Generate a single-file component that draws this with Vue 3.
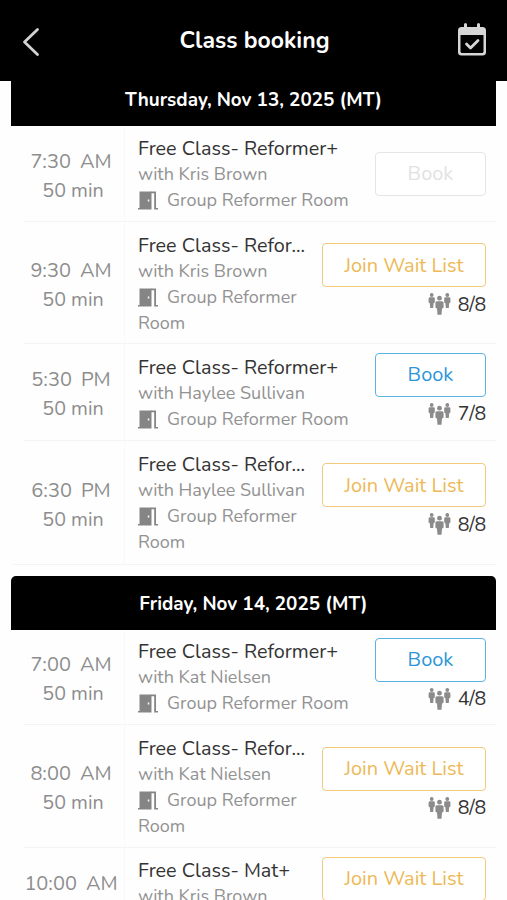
<script setup>
const days = [
  {
    label: 'Thursday, Nov 13, 2025 (MT)',
    key: 'thu',
    classes: [
      { h: 96, time: '7:30', half: 'AM', title: 'Free Class- Reformer+', coach: 'Kris Brown', action: 'disabled' },
      { h: 122, time: '9:30', half: 'AM', title: 'Free Class- Refor...', coach: 'Kris Brown', action: 'wait', count: '8/8' },
      { h: 97, time: '5:30', half: 'PM', title: 'Free Class- Reformer+', coach: 'Haylee Sullivan', action: 'book', count: '7/8' },
      { h: 124, time: '6:30', half: 'PM', title: 'Free Class- Refor...', coach: 'Haylee Sullivan', action: 'wait', count: '8/8' },
    ],
  },
  {
    label: 'Friday, Nov 14, 2025 (MT)',
    key: 'fri',
    classes: [
      { h: 95, time: '7:00', half: 'AM', title: 'Free Class- Reformer+', coach: 'Kat Nielsen', action: 'book', count: '4/8' },
      { h: 123, time: '8:00', half: 'AM', title: 'Free Class- Refor...', coach: 'Kat Nielsen', action: 'wait', count: '8/8' },
      { h: 97, time: '10:00', half: 'AM', title: 'Free Class- Mat+', coach: 'Kris Brown', action: 'wait', count: '8/8' },
    ],
  },
]
</script>

<template>
  <div class="screen">
    <header class="bar">
      <svg class="back" viewBox="0 0 18 30"><path d="M15.500 2.500 2.500 15l13 12.500" /></svg>
      <h1>Class booking</h1>
      <svg class="cal" viewBox="0 0 30 34">
        <path fill-rule="evenodd" d="M7 1.500a1.500 1.500 0 0 1 3 0V4h10V1.500a1.500 1.500 0 0 1 3 0V4h2.500a3.500 3.500 0 0 1 3.500 3.500V29a3.500 3.500 0 0 1-3.500 3.500H4.500A3.500 3.500 0 0 1 1 29V7.500A3.500 3.500 0 0 1 4.500 4H7zM3.500 12v17l1 1h21l1-1V12z" />
        <path class="tick" d="m9.500 21 4 4 7.500-7.500" />
      </svg>
    </header>
    <section v-for="day in days" :key="day.key" class="day" :class="day.key">
      <h2><span>{{ day.label }}</span></h2>
      <article v-for="c in day.classes" :key="c.time" class="row" :style="{ height: c.h + 'px' }">
        <div class="when">
          <div><span>{{ c.time }}</span><span class="half">{{ c.half }}</span></div>
          <div class="dur">50 min</div>
        </div>
        <div class="info">
          <div class="title">{{ c.title }}</div>
          <div class="coach">with {{ c.coach }}</div>
          <div class="room">
            <svg class="door" viewBox="0 0 20 19"><path fill-rule="evenodd" d="M1.500.500H13.500V18.500H0V17h1.500zM9.800 8.500v2h1.500v-2z" /><path d="M13 .500h5V17h2v1.500h-3.800V2.200H13z" /></svg>Group Reformer Room
          </div>
        </div>
        <div class="side">
          <button :class="c.action">{{ c.action === 'wait' ? 'Join Wait List' : 'Book' }}</button>
          <div v-if="c.count" class="count">
            <svg viewBox="0 0 23 22">
              <g><circle cx="3.700" cy="2" r="1.900" /><path d="M1.800 4.300h3.800q1.200 0 1.200 1.200v4l-1.200.8-.4 4.700H2.200l-.4-4.700-1.200-.8v-4q0-1.200 1.200-1.200z" /></g>
              <g><circle cx="19.300" cy="2" r="1.900" /><path d="M17.400 4.300h3.800q1.200 0 1.200 1.200v4l-1.200.8-.4 4.700h-3l-.4-4.700-1.200-.8v-4q0-1.200 1.200-1.200z" /></g>
              <g><circle cx="11.500" cy="5.200" r="2.400" /><path d="M9 8.200h5q1.600 0 1.600 1.600v4.700l-1.600 1.200-.5 6h-4l-.5-6-1.600-1.200V9.800q0-1.600 1.600-1.600z" /></g>
            </svg>
            <span>{{ c.count }}</span>
          </div>
        </div>
      </article>
    </section>
  </div>
</template>

<style>
body { background: #fff; overflow: hidden; }
</style>

<style scoped>
* { box-sizing: border-box; }
.screen { height: 900px; overflow: hidden; font-family: Nunito, Lato, "Open Sans", sans-serif; background: #fefefe; }
.bar { height: 81px; background: #000; display: grid; grid-template-columns: 30px 1fr 30px; align-items: center; padding: 0 20px 0 22px; }
.back { width: 18px; height: 30px; margin-top: 2px; fill: none; stroke: #d2d2d2; stroke-width: 2.8; stroke-linecap: round; stroke-linejoin: round; }
.cal { width: 30px; height: 34px; margin-bottom: 1px; fill: #d6d6d6; }
.tick { fill: none; stroke: #d6d6d6; stroke-width: 2.8; stroke-linecap: round; stroke-linejoin: round; }
h1 { margin: 0; text-align: center; font-size: 23px; line-height: 30px; font-weight: 700; color: #fff; }
.day { margin: 0 11px; }
h2 { margin: 0; background: #000; color: #fff; font-size: 18.900px; font-weight: 700; display: flex; align-items: center; justify-content: center; }
.thu h2 { height: 45px; padding-bottom: 7px; }
.fri { margin-top: 11px; }
.fri h2 { height: 54px; padding-top: 1px; border-radius: 5px 5px 0 0; }
.row { display: flex; margin-left: 12px; border-bottom: 1px solid #f4f4f4; }
.row:last-child { margin-left: 2px; padding-left: 10px; }
.when { width: 102px; flex: none; border-right: 1px solid #f9f9f9; display: flex; flex-direction: column; align-items: center; justify-content: center; padding: 4px 5px 0 0; font-size: 20px; line-height: 29px; color: #8d8d8d; white-space: nowrap; }
.dur { padding-left: 4px; font-size: 19.700px; }
.half { margin-left: 9px; }
.info { flex: 1; min-width: 0; padding: 10px 0 0 13px; line-height: 26px; font-size: 18px; color: #929292; }
.title { font-size: 19.800px; line-height: 27px; margin-bottom: -1px; color: #333; white-space: nowrap; }
.thu .row:nth-of-type(1) .info, .fri .row:nth-of-type(3) .info { padding-top: 9px; }
.fri .row:nth-of-type(1) .info { padding-top: 8px; }
.door { width: 20px; height: 19px; margin-right: 9px; vertical-align: -4px; fill: #858585; }
.side { flex: none; margin-left: 12px; padding-right: 10px; display: flex; flex-direction: column; align-items: flex-end; justify-content: center; }
button { height: 44px; width: 111px; border: 1.500px solid; border-radius: 4px; background: #fff; font: 20px Nunito, Lato, sans-serif; padding: 0; }
.book { color: #2d96d8; border-color: #5fb1e3; }
.wait { width: 164px; color: #edb957; border-color: #f1ca7d; }
.disabled { color: #e2e2e2; border-color: #e5e5e5; }
.count { height: 35px; padding-bottom: 1px; display: flex; align-items: center; gap: 7px; font-size: 19.500px; letter-spacing: -.2px; color: #333; }
.count svg { width: 23px; height: 22px; fill: #8b8b8b; }
</style>
